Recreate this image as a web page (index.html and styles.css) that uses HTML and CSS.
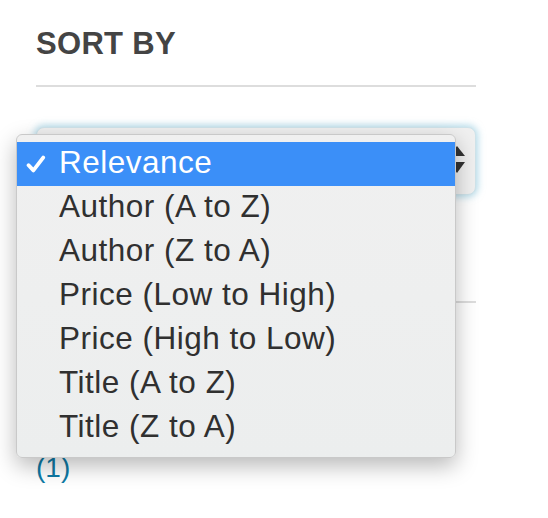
FILE: index.html
```html
<!DOCTYPE html>
<html>
<head>
<meta charset="utf-8">
<link rel="stylesheet" href="styles.css">
</head>
<body>
<div class="panel">
  <h2 class="title">SORT BY</h2>
  <div class="rule"></div>
  <div class="select">
    <svg class="arrows" width="16" height="28" viewBox="0 0 16 28">
      <polygon points="0,10 16,10 8,0" fill="#333"/>
      <polygon points="0,16 16,16 8,27" fill="#333"/>
    </svg>
  </div>
  <div class="rule rule-low"></div>
  <a class="count">(1)</a>
</div>
<ul class="menu">
  <li class="item selected">
    <svg class="check" width="20" height="18" viewBox="0 0 20 18">
      <polyline points="2.6,10.2 7.4,15.4 17.2,2.6" fill="none" stroke="#fff" stroke-width="3.8" stroke-linecap="round" stroke-linejoin="round"/>
    </svg>
    Relevance</li>
  <li class="item">Author (A to Z)</li>
  <li class="item">Author (Z to A)</li>
  <li class="item">Price (Low to High)</li>
  <li class="item">Price (High to Low)</li>
  <li class="item">Title (A to Z)</li>
  <li class="item">Title (Z to A)</li>
</ul>
</body>
</html>
```
FILE: styles.css
```css
html, body {
  margin: 0;
  padding: 0;
  background: #fff;
  font-family: "Liberation Sans", Helvetica, Arial, sans-serif;
}
.panel {
  margin-left: 36px;
  width: 440px;
  padding-top: 26px;
}
.title {
  margin: 0;
  font-size: 31px;
  line-height: 36px;
  font-weight: bold;
  letter-spacing: 0.3px;
  color: #444;
}
.rule {
  margin-top: 23px;
  height: 2px;
  background: #dddddd;
}
.select {
  margin-top: 40px;
  height: 66px;
  border: 1px solid #cfe3ea;
  border-radius: 8px;
  background: #f0f0f0;
  box-shadow: 0 0 7px 2px rgba(120, 190, 215, 0.55);
  display: flex;
  align-items: center;
  justify-content: flex-end;
  padding-right: 10px;
}
.arrows {
  display: block;
  margin-top: -2px;
}
.rule-low {
  margin-top: 106px;
}
.count {
  display: block;
  margin-top: 149px;
  font-size: 28px;
  line-height: 32px;
  color: #0e7aa5;
}
.menu {
  position: absolute;
  left: 16px;
  top: 134px;
  width: 438px;
  margin: 0;
  padding: 7px 0 7px;
  list-style: none;
  background: linear-gradient(#f0f0f0, #eceeee);
  border: 1px solid #c9c9c9;
  border-radius: 6px;
  box-shadow: 0 8px 22px rgba(0, 0, 0, 0.28);
}
.item {
  position: relative;
  padding: 0 0 4px 42px;
  height: 40px;
  line-height: 40px;
  font-size: 31.5px;
  letter-spacing: 0.5px;
  color: #303030;
  white-space: nowrap;
}
.item.selected {
  background: #3b8ff8;
  color: #fff;
}
.check {
  position: absolute;
  left: 9px;
  top: 13px;
}
```
